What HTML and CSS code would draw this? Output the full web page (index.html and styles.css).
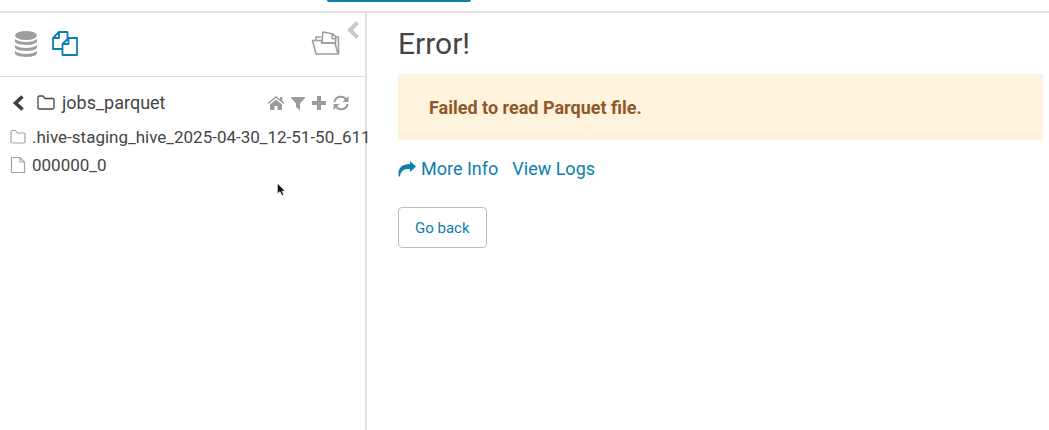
FILE: index.html
```html
<!DOCTYPE html>
<html lang="en">
<head>
<meta charset="utf-8">
<title>Hue - File Browser</title>
<link rel="stylesheet" href="styles.css">
</head>
<body>
<header class="topbar"><div class="topbar-button"></div></header>
<div class="layout">
  <aside class="sidebar">
    <div class="assist-tabs">
      <button class="icon-button" aria-label="Databases">
        <svg width="24" height="28" viewBox="0 0 24 28" fill="#9e9e9e"><ellipse cx="12" cy="5.500" rx="11" ry="4.500"/><path d="M1 9c4 4 18 4 22 0v2.500c-1 4.500-21 4.500-22 0zM1 15c4 4 18 4 22 0v2.500c-1 4.500-21 4.500-22 0zM1 21c4 4 18 4 22 0v2.500c-1 4.500-21 4.500-22 0z"/></svg>
      </button>
      <button class="icon-button" aria-label="Files">
        <svg width="28" height="28" viewBox="0 0 28 28" fill="none" stroke="#0b7fad" stroke-width="1.800" stroke-linejoin="round"><path d="M10 19H1V8l6-6h8.500v6M7 2v6H1"/><path d="M16.500 8H25v17H10.500V14zM16.500 8v6h-6" fill="#fff"/></svg>
      </button>
      <button class="icon-button documents" aria-label="Documents">
        <svg width="30" height="28" viewBox="0 0 30 28" fill="none" stroke="#9e9e9e" stroke-width="1.600" stroke-linejoin="round"><path d="M5 10V7h5M24 7h3.500v17H5L1.500 10.500H11L10.500 13H24L27 24"/><path d="M11 11l1-9 10 2 3 3-.5 6H11zM21.500 4l-.5 4.500 4 .5"/></svg>
      </button>
      <button class="collapse" aria-label="Collapse panel">
        <svg width="12" height="18" viewBox="0 0 12 18" fill="none" stroke="#c8c8c8" stroke-width="4"><path d="M10.500 1.500L3 9l7.500 7.500"/></svg>
      </button>
    </div>
    <div class="path-row">
      <button class="icon-button" aria-label="Back">
        <svg width="12" height="16" viewBox="0 0 12 16" fill="none" stroke="#3f3f3f" stroke-width="3.600"><path d="M10.500 1.500L3.500 8l7 6.500"/></svg>
      </button>
      <svg class="path-folder" width="18" height="16" viewBox="0 0 18 16" fill="none" stroke="#454545" stroke-width="1.300" stroke-linejoin="round"><path d="M1 2.500Q1 1 2.500 1H6l2 2.500h7.500Q17 3.500 17 5v7.500q0 1.500-1.500 1.500h-13Q1 14 1 12.500z"/></svg>
      <a class="path-name" href="#">jobs_parquet</a>
      <div class="path-actions">
        <button class="icon-button" aria-label="Home"><svg width="18" height="16" viewBox="0 0 18 16" fill="#9b9b9b"><path d="M9 4.500l6 5V15h-4.500v-4h-3v4H3V9.500z"/><path d="M1 8.500L9 2l8 6.500" fill="none" stroke="#9b9b9b" stroke-width="1.500"/><path d="M13 2h2.300v5L13 5z"/></svg></button>
        <button class="icon-button" aria-label="Filter"><svg width="16" height="16" viewBox="0 0 16 16" fill="#9b9b9b"><path d="M1 2h14v1L10 8.500V15.500L6 12V8.500L1 3z"/></svg></button>
        <button class="icon-button" aria-label="Add"><svg width="16" height="16" viewBox="0 0 16 16" fill="#9b9b9b"><path d="M6 1h4v5h5v4h-5v5H6v-5H1V6h5z"/></svg></button>
        <button class="icon-button" aria-label="Refresh"><svg width="18" height="16" viewBox="0 0 18 16" fill="none" stroke="#9b9b9b" stroke-width="2"><path d="M2.500 7C3.500 1 11 0 14 4.500M15.500 9C14.500 15 7 16 4 11.500"/><path d="M16.500 1v6h-6zM1.500 15V9h6z" fill="#9b9b9b" stroke="none"/></svg></button>
      </div>
    </div>
    <ul class="files">
      <li><a href="#"><svg width="16" height="16" viewBox="0 0 16 16" fill="none" stroke="#a3a3a3" stroke-width="1.200" stroke-linejoin="round"><path d="M1 3q0-1.500 1.500-1.500h3l2 2.500h6Q15 4 15 5.500v7q0 1.500-1.500 1.500h-11Q1 14 1 12.500z"/></svg><span>.hive-staging_hive_2025-04-30_12-51-50_611</span></a></li>
      <li><a href="#"><svg width="16" height="18" viewBox="0 0 16 18" fill="none" stroke="#a3a3a3" stroke-width="1.200"><path d="M1.500 1.500H10l4.500 4.500v10.500h-13zM10 1.500V6h4.500"/></svg><span>000000_0</span></a></li>
    </ul>
  </aside>
  <main class="content">
    <h1>Error!</h1>
    <div class="alert" role="alert">Failed to read Parquet file.</div>
    <div class="links">
      <a href="#"><svg width="18" height="16" viewBox="0 0 18 16" fill="#0b7fad"><path d="M12 0l6 5.500-6 5.500V8C6 7.500 3 9 2 15.500H.7C-.5 8 3 3 12 3z"/></svg>More Info</a>
      <a href="#">View Logs</a>
    </div>
    <button class="back">Go back</button>
  </main>
</div>
<svg class="pointer" width="9" height="13" viewBox="0 0 9 13"><path d="M.5.5v10L3 8.500l2 4 1.500-1-1.500-3.500h3z" fill="#111" stroke="#ddd" stroke-width=".6"/></svg>
</body>
</html>
```
FILE: styles.css
```css
* { box-sizing: border-box; }
body {
  margin: 0;
  min-height: 100vh;
  display: flex;
  flex-direction: column;
  background: #fff;
  color: #454545;
  font-family: Roboto, "Liberation Sans", sans-serif;
  font-size: 18px;
  line-height: 28px;
}
a { color: inherit; text-decoration: none; }
button { font: inherit; cursor: pointer; }
svg { display: block; flex: none; }
ul { margin: 0; padding: 0; list-style: none; }
.topbar { height: 13px; border-bottom: 2px solid #e3e3e3; }
.topbar-button {
  width: 144px;
  height: 2px;
  margin-left: 327px;
  background: #0b7fad;
  border-radius: 0 0 3px 3px;
}
.layout { flex: 1; display: flex; }
.sidebar {
  flex: none;
  width: 367px;
  border-right: 2px solid #e3e3e3;
}
.icon-button, .collapse { padding: 0; border: 0; background: none; }
.assist-tabs {
  display: flex;
  align-items: center;
  gap: 14px;
  height: 64px;
  padding: 0 6px 2px 14px;
  border-bottom: 1px solid #dcdcdc;
}
.documents { margin-left: auto; }
.collapse { align-self: flex-start; margin: 8px 0 0 -8px; }
.path-row { display: flex; align-items: center; padding: 12px 15px 6px 12px; }
.path-folder { margin: 0 7px 0 13px; }
.path-actions { display: flex; gap: 5px; margin-left: auto; }
.files a { display: flex; align-items: center; gap: 6px; padding-left: 10px; font-size: 17px; white-space: nowrap; }
.content { flex: 1; padding: 12px 6px 12px 31px; }
h1 { margin: 0 0 11px; font-size: 30px; line-height: 38px; font-weight: 400; }
.alert { padding: 20px 31px 18px; background: #fff3dd; color: #8f582a; font-weight: 700; }
.links { display: flex; gap: 14px; margin: 15px 0 24px; color: #0b7fad; }
.links a { display: flex; align-items: center; gap: 5px; }
.back {
  padding: 6px 16px 5px;
  border: 1px solid #bdbdbd;
  border-radius: 4px;
  background: #fff;
  color: #0b7fad;
  font-size: 15px;
  line-height: 28px;
}
.pointer { position: absolute; left: 277px; top: 183px; }
```
